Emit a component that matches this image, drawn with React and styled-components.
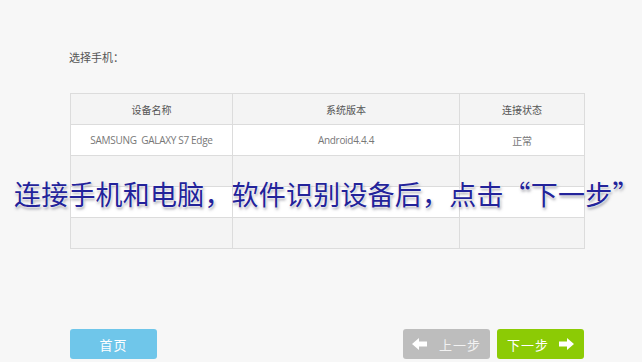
import React from "react";
import styled, { createGlobalStyle } from "styled-components";

const Global = createGlobalStyle`
  html, body { margin: 0; padding: 0; background: #f7f7f7; }
  body { font-family: "Noto Sans CJK SC", "Noto Sans", sans-serif; }
`;

const Page = styled.div`
  position: relative;
  width: 642px;
  height: 362px;
  overflow: hidden;
  background: #f7f7f7;
  box-sizing: border-box;
  padding: 48px 58px 0 70px;
  display: flex;
  flex-direction: column;
`;

const Title = styled.div`
  font-size: 11px;
  line-height: 18px;
  color: #555;
  margin-left: -1px;
`;

const Table = styled.table`
  margin-top: 27px;
  width: 514px;
  border-collapse: collapse;
  table-layout: fixed;
  border: 1px solid #dcdcdc;
`;

const Th = styled.th`
  height: 30px;
  padding: 0;
  font-weight: normal;
  font-size: 10px;
  color: #555;
  background: #f4f4f4;
  border: 1px solid #dcdcdc;
  text-align: center;
`;

const Tr = styled.tr`
  background: ${(p) => (p.$alt ? "#f4f4f4" : "#ffffff")};
`;

const Td = styled.td`
  height: 30px;
  padding: 0;
  font-family: "Open Sans", "Noto Sans CJK SC", sans-serif;
  font-size: 10px;
  color: #777;
  border: 1px solid #dcdcdc;
  text-align: center;
  letter-spacing: -0.3px;
`;

const Footer = styled.div`
  margin-top: 80px;
  display: flex;
  align-items: center;
`;

const Btn = styled.div`
  height: 30px;
  width: ${(p) => p.$w}px;
  border-radius: 3px;
  background: ${(p) => p.$bg};
  color: ${(p) => p.$fg || "#fff"};
  font-size: 13px;
  display: flex;
  align-items: center;
  justify-content: center;
  gap: ${(p) => p.$gap || 0}px;
  margin-left: ${(p) => p.$ml || 0}px;
  letter-spacing: 1px;
`;

const Spacer = styled.div`
  flex: 1;
`;

const Caption = styled.div`
  position: absolute;
  left: 14px;
  top: 176px;
  width: 630px;
  white-space: nowrap;
  font-size: 27px;
  line-height: 36px;
  color: #23239a;
  letter-spacing: 0.2px;
  text-shadow: 0 0 2px #fff, 0 0 3px #fff, 1px 2px 3px rgba(60, 60, 80, 0.55);
`;

const Arrow = ({ dir }) => (
  <svg width="15" height="12" viewBox="0 0 15 12" style={{ transform: dir === "left" ? "scaleX(-1)" : "none" }}>
    <path d="M0 3.5 H8 V0 L15 6 L8 12 V8.5 H0 Z" fill="#fff" />
  </svg>
);

export default function App() {
  return (
    <>
      <Global />
      <Page>
        <Title>选择手机：</Title>
        <Table>
          <colgroup>
            <col style={{ width: 162 }} />
            <col style={{ width: 227 }} />
            <col style={{ width: 125 }} />
          </colgroup>
          <thead>
            <tr>
              <Th>设备名称</Th>
              <Th>系统版本</Th>
              <Th>连接状态</Th>
            </tr>
          </thead>
          <tbody>
            <Tr>
              <Td>SAMSUNG&nbsp; GALAXY S7 Edge</Td>
              <Td>Android4.4.4</Td>
              <Td>正常</Td>
            </Tr>
            <Tr $alt>
              <Td />
              <Td />
              <Td />
            </Tr>
            <Tr>
              <Td />
              <Td />
              <Td />
            </Tr>
            <Tr $alt>
              <Td />
              <Td />
              <Td />
            </Tr>
          </tbody>
        </Table>
        <Footer>
          <Btn $w={87} $bg="#6fc6ea">首页</Btn>
          <Spacer />
          <Btn $w={87} $bg="#bdbdbd" $fg="#f2f2f2" $gap={12}>
            <Arrow dir="left" />
            <span>上一步</span>
          </Btn>
          <Btn $w={87} $bg="#8ccb05" $gap={10} $ml={7}>
            <span>下一步</span>
            <Arrow dir="right" />
          </Btn>
        </Footer>
        <Caption>连接手机和电脑，软件识别设备后，点击“下一步”</Caption>
      </Page>
    </>
  );
}
